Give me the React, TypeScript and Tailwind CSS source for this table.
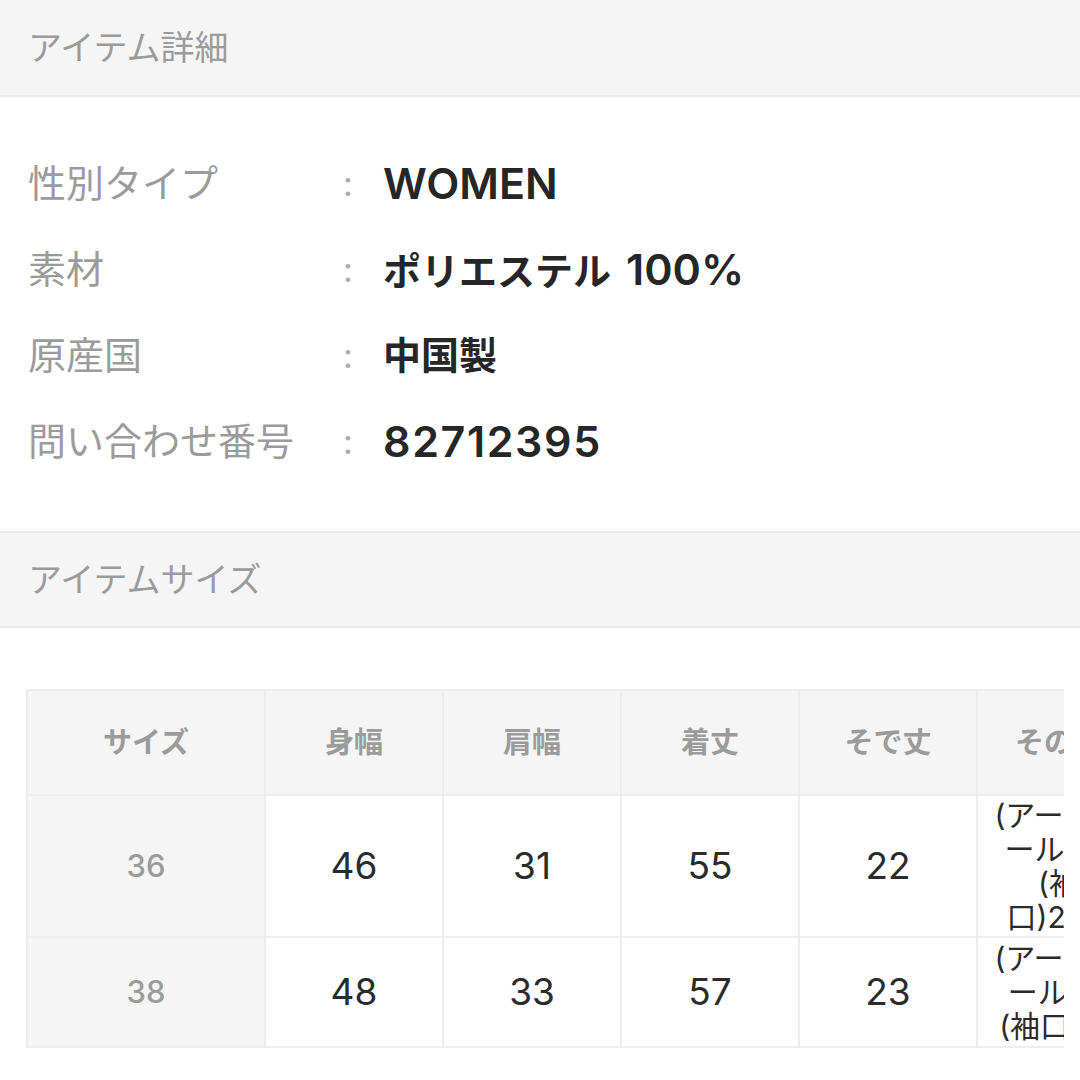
import React from "react";

const details = [
  { label: "性別タイプ", value: <span className="text-[43px] font-semibold">WOMEN</span> },
  {
    label: "素材",
    value: (
      <>
        ポリエステル <span className="ml-[6px] text-[43px] font-semibold">100%</span>
      </>
    ),
  },
  { label: "原産国", value: "中国製" },
  {
    label: "問い合わせ番号",
    value: <span className="text-[43px] font-semibold tracking-[1.6px]">82712395</span>,
  },
];

const heads = ["サイズ", "身幅", "肩幅", "着丈", "そで丈", "その他"];

const rows = [
  { size: "36", cells: ["46", "31", "55", "22"], other: ["(アームホ", "ール)20", "(袖", "口)22.5"], h: "h-[142px]" },
  { size: "38", cells: ["48", "33", "57", "23"], other: ["(アームホ", "ール)21", "(袖口)23"], h: "h-[110px]" },
];

const SectionHeader = ({ title, top }: { title: string; top?: boolean }) => (
  <div
    className={`h-[97px] bg-[#f5f5f5] border-b-2 border-[#ebebeb] flex items-center pl-[28px] text-[34px] text-[#9b9b9b] ${
      top ? "border-t-2" : ""
    }`}
  >
    {title}
  </div>
);

export default function App() {
  return (
    <div
      className="w-[1080px] h-[1080px] bg-white overflow-hidden"
      style={{ fontFamily: "Inter, 'Noto Sans CJK JP', sans-serif" }}
    >
      <SectionHeader title="アイテム詳細" />

      <div className="pt-[43px] pb-[47px]">
        {details.map((d) => (
          <div key={d.label} className="grid grid-cols-[343px_40px_1fr] h-[86px] items-center">
            <div className="pl-[28px] text-[38px] text-[#9b9b9b]">{d.label}</div>
            <div className="text-[34px] text-[#aaaaaa]">:</div>
            <div className="text-[38px] font-bold text-[#262626] whitespace-nowrap">{d.value}</div>
          </div>
        ))}
      </div>

      <SectionHeader title="アイテムサイズ" top />

      <div className="pt-[61px] pl-[26px]">
        <div className="w-[1038px] overflow-hidden">
          <table className="table-fixed border-collapse w-[1113px]">
            <colgroup>
              <col className="w-[238px]" />
              <col className="w-[178px]" />
              <col className="w-[178px]" />
              <col className="w-[178px]" />
              <col className="w-[178px]" />
              <col className="w-[163px]" />
            </colgroup>
            <thead>
              <tr className="h-[105px]">
                {heads.map((h) => (
                  <th
                    key={h}
                    className="border-2 border-[#ededed] bg-[#f5f5f5] text-[29px] font-bold text-[#9b9b9b] text-center whitespace-nowrap"
                  >
                    {h}
                  </th>
                ))}
              </tr>
            </thead>
            <tbody>
              {rows.map((r) => (
                <tr key={r.size} className={r.h}>
                  <td className="border-2 border-[#ededed] bg-[#f5f5f5] text-center text-[31px] font-medium text-[#9b9b9b]">
                    {r.size}
                  </td>
                  {r.cells.map((c, i) => (
                    <td key={i} className="border-2 border-[#ededed] text-center text-[37px] text-[#2b2b2b]">
                      {c}
                    </td>
                  ))}
                  <td className="border-2 border-[#ededed] text-center text-[30px] leading-[34px] text-[#2b2b2b]">
                    {r.other.map((l, i) => (
                      <div key={i} className="whitespace-nowrap">
                        {l}
                      </div>
                    ))}
                  </td>
                </tr>
              ))}
            </tbody>
          </table>
        </div>
      </div>
    </div>
  );
}
